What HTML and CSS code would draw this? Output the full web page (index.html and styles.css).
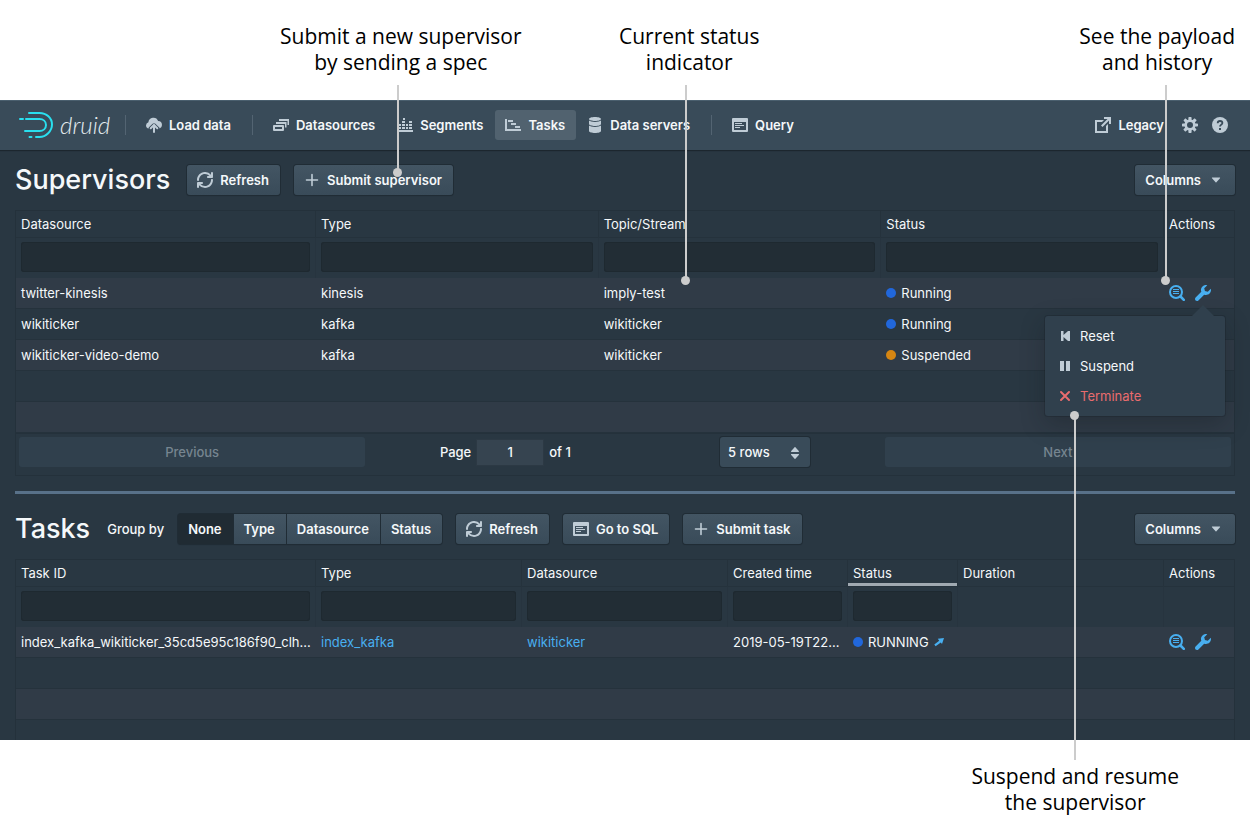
FILE: index.html
```html
<!DOCTYPE html>
<html lang="en">
<head>
<meta charset="utf-8">
<meta name="viewport" content="width=device-width, initial-scale=1">
<title>Druid console: Tasks</title>
<link rel="stylesheet" href="styles.css">
</head>
<body>
<svg class="sprite" aria-hidden="true">
  <symbol id="i-upload" viewBox="0 0 16 16">
    <path d="M12.1 4.1A5 5 0 0 0 2.4 5.3 3.6 3.6 0 0 0 0 8.6c0 1.5 1 2.600 2.300 3.050.1-.5.3-.95.7-1.350l3.600-3.600c.75-.75 2.050-.75 2.800 0l3.600 3.600c.35.35.6.8.7 1.250A4 4 0 0 0 16 8a4 4 0 0 0-3.900-3.900z"/>
    <path d="M8 15V8.500M4.700 11.300L8 8l3.300 3.300" fill="none" stroke="currentColor" stroke-width="2" stroke-linecap="round"/>
  </symbol>
  <symbol id="i-multi" viewBox="0 0 16 16">
    <path fill-rule="evenodd" d="M1 8h9a1 1 0 0 1 1 1v4a1 1 0 0 1-1 1H1a1 1 0 0 1-1-1V9a1 1 0 0 1 1-1zm1 2v2h7v-2z"/>
    <path d="M3 5h10.500v5.500H12V7H3zM6 2h10v6h-1.500V4H6z"/>
  </symbol>
  <symbol id="i-chart" viewBox="0 0 16 16">
    <path d="M0 13h16v2H0zM1 10h3v2H1zM1 7h3v2H1zM5 10h3v2H5zM5 7h3v2H5zM5 4h3v2H5zM6 1h2v2H6zM9 10h2v2H9zM9 7h2v2H9zM12 10h3v2h-3zM12 7h3v2h-3zM12 4h3v2h-3z"/>
  </symbol>
  <symbol id="i-gantt" viewBox="0 0 16 16">
    <path d="M0 2h2v10h14v2H0zM3 3h5v2H3zM6 6h5v2H6zM10 9h5v2h-5z"/>
  </symbol>
  <symbol id="i-database" viewBox="0 0 16 16">
    <path d="M8 0c3.300 0 6 .9 6 2s-2.700 2-6 2-6-.9-6-2 2.700-2 6-2zM2 3.600C3 4.500 5.300 5 8 5s5-.5 6-1.400V7c0 1.100-2.700 2-6 2s-6-.9-6-2zM2 8.600C3 9.500 5.300 10 8 10s5-.5 6-1.400V14c0 1.100-2.700 2-6 2s-6-.9-6-2z"/>
  </symbol>
  <symbol id="i-app" viewBox="0 0 16 16">
    <path fill-rule="evenodd" d="M1 1h14a1 1 0 0 1 1 1v12a1 1 0 0 1-1 1H1a1 1 0 0 1-1-1V2a1 1 0 0 1 1-1zm1 4v8h12V5z"/>
    <path d="M3 6h7v1H3zM3 8h9v1H3zM3 10h5v1H3z"/>
  </symbol>
  <symbol id="i-share" viewBox="0 0 16 16">
    <path d="M9 3H0v13h13V7l-2 2v5H2V5h5z"/>
    <path d="M9 0h7v7h-2V3.500L7.500 10 6 8.500 12.500 2H9z"/>
  </symbol>
  <symbol id="i-cog" viewBox="0 0 16 16">
    <path d="M15.190 6.390h-1.850c-.11-.37-.27-.71-.45-1.040l1.360-1.360c.31-.31.31-.82 0-1.130l-1.130-1.130c-.31-.31-.82-.31-1.130 0l-1.360 1.360c-.33-.17-.67-.33-1.040-.44V.79c0-.44-.36-.8-.8-.8h-1.600c-.44 0-.8.36-.8.8v1.860c-.39.12-.75.28-1.100.47l-1.300-1.300c-.3-.3-.79-.3-1.090 0L1.820 2.910c-.3.3-.3.79 0 1.090l1.300 1.300c-.2.34-.36.7-.48 1.090H.79c-.44 0-.8.36-.8.8v1.600c0 .44.36.8.8.8h1.850c.11.37.27.71.45 1.040l-1.360 1.360c-.31.31-.31.82 0 1.130l1.130 1.130c.31.31.82.31 1.130 0l1.360-1.360c.33.18.67.33 1.040.44v1.860c0 .44.36.8.8.8h1.600c.44 0 .8-.36.8-.8v-1.860c.39-.12.75-.28 1.100-.47l1.300 1.300c.3.3.79.3 1.090 0l1.090-1.090c.3-.3.3-.79 0-1.090l-1.300-1.300c.19-.35.36-.71.48-1.100h1.850c.44 0 .8-.36.8-.8v-1.600a.816.816 0 0 0-.81-.79zM8 11a3 3 0 1 1 0-6 3 3 0 0 1 0 6z"/>
  </symbol>
  <symbol id="i-help" viewBox="0 0 16 16">
    <circle cx="8" cy="8" r="8"/>
    <path d="M5.700 6.200C5.700 4.700 6.600 4 8 4s2.400.8 2.400 2c0 1.700-2.400 1.600-2.400 3.600" fill="none" stroke="#394b59" stroke-width="1.800"/>
    <path d="M7 11h2v2H7z" fill="#394b59"/>
  </symbol>
  <symbol id="i-refresh" viewBox="0 0 16 16">
    <path d="M14.990 6.990c-.55 0-1 .45-1 1 0 3.310-2.690 6-6 6-1.770 0-3.360-.78-4.460-2h1.460c.55 0 1-.45 1-1s-.45-1-1-1h-4c-.55 0-1 .45-1 1v4c0 .55.45 1 1 1s1-.45 1-1v-1.740a7.950 7.950 0 0 0 6 2.740c4.420 0 8-3.580 8-8 0-.55-.45-1-1-1zm0-7c-.55 0-1 .45-1 1v1.740a7.950 7.950 0 0 0-6-2.740c-4.420 0-8 3.580-8 8 0 .55.45 1 1 1s1-.45 1-1c0-3.310 2.690-6 6-6 1.770 0 3.360.78 4.460 2h-1.460c-.55 0-1 .45-1 1s.45 1 1 1h4c.55 0 1-.45 1-1v-4c0-.55-.45-1-1-1z"/>
  </symbol>
  <symbol id="i-plus" viewBox="0 0 16 16">
    <path d="M8 2.500v11M2.500 8h11" fill="none" stroke="currentColor" stroke-width="1.600" stroke-linecap="round"/>
  </symbol>
  <symbol id="i-caret" viewBox="0 0 16 16">
    <path d="M4.300 5.500h7.400c.4 0 .6.4.3.7L8.400 10.300a.5.5 0 0 1-.8 0L4 6.200c-.3-.3-.1-.7.300-.7z"/>
  </symbol>
  <symbol id="i-updown" viewBox="0 0 16 16">
    <path d="M8.400 2.300l3.400 3.800c.4.4.2.9-.3.9h-7c-.5 0-.7-.5-.3-.9l3.400-3.800c.2-.3.600-.3.800 0zM8.400 13.700l3.400-3.800c.4-.4.2-.9-.3-.9h-7c-.5 0-.7.5-.3.900l3.400 3.800c.2.300.600.300.800 0z"/>
  </symbol>
  <symbol id="i-detail" viewBox="0 0 16 16">
    <circle cx="7" cy="7" r="6" fill="none" stroke="currentColor" stroke-width="2"/>
    <path d="M11.500 11.500l3.300 3.300" stroke="currentColor" stroke-width="2.600" stroke-linecap="round"/>
    <path d="M4 4h6v1H4zM4 6h6v1H4zM4 8h6v1H4z"/>
  </symbol>
  <symbol id="i-wrench" viewBox="0 0 16 16">
    <path d="M15.830 3.700l-3.060 3.050-2.840-.7-.7-2.830L12.290.17a5.004 5.004 0 0 0-4.830 1.290 4.967 4.967 0 0 0-1.120 5.360L.58 12.580c-.36.36-.58.86-.58 1.410 0 1.100.9 2 2 2 .55 0 1.050-.22 1.410-.59l5.770-5.770c1.790.69 3.910.35 5.350-1.120 1.320-1.300 1.740-3.150 1.300-4.810z"/>
  </symbol>
  <symbol id="i-reset" viewBox="0 0 16 16"><path d="M4 3h2.500v4L11 3h2v10h-2L6.500 9v4H4z"/></symbol>
  <symbol id="i-pause" viewBox="0 0 16 16"><path d="M3 3h4v10H3zM9 3h4v10H9z"/></symbol>
  <symbol id="i-cross" viewBox="0 0 16 16"><path d="M4 4l8 8M12 4l-8 8" stroke="currentColor" stroke-width="2" stroke-linecap="round"/></symbol>
  <symbol id="i-arrow" viewBox="0 0 10 10"><path d="M3.800 1.800L10 1 8 7 6.800 5.600 1.600 9.200.3 7.600 5.200 3.700z"/></symbol>
</svg>

<div class="page">
  <main class="app">
    <nav class="navbar" aria-label="Main">
      <a class="logo" href="#">
        <svg class="logo-mark" viewBox="0 0 36 28" aria-hidden="true">
          <path d="M11 2h10.500c7 0 12.500 5 12.500 11.500S28 26 21.500 26H18M13.500 26H11.500M2 8h3M8 8h13.500c3.700 0 6.500 2.500 6.500 6s-2.800 6-6.500 6H7" fill="none" stroke="#29dfee" stroke-width="2" stroke-linecap="round"/>
        </svg>
        <span>druid</span>
      </a>
      <span class="divider"></span>
      <a class="nav-item" href="#"><svg class="icon"><use href="#i-upload"/></svg>Load data</a>
      <span class="divider"></span>
      <a class="nav-item" href="#"><svg class="icon"><use href="#i-multi"/></svg>Datasources</a>
      <a class="nav-item" href="#"><svg class="icon"><use href="#i-chart"/></svg>Segments</a>
      <a class="nav-item active" href="#" aria-current="page"><svg class="icon"><use href="#i-gantt"/></svg>Tasks</a>
      <a class="nav-item" href="#"><svg class="icon"><use href="#i-database"/></svg>Data servers</a>
      <span class="divider"></span>
      <a class="nav-item" href="#"><svg class="icon"><use href="#i-app"/></svg>Query</a>
      <div class="nav-end">
        <a class="nav-item" href="#"><svg class="icon"><use href="#i-share"/></svg>Legacy</a>
        <button class="nav-icon" type="button" aria-label="Settings"><svg class="icon"><use href="#i-cog"/></svg></button>
        <button class="nav-icon" type="button" aria-label="Help"><svg class="icon"><use href="#i-help"/></svg></button>
      </div>
    </nav>

    <section class="view">
      <div class="control-bar">
        <h1>Supervisors</h1>
        <div class="controls">
          <button class="btn" type="button"><svg class="icon"><use href="#i-refresh"/></svg>Refresh</button>
          <button class="btn" type="button"><svg class="icon"><use href="#i-plus"/></svg>Submit supervisor</button>
        </div>
        <button class="btn columns" type="button">Columns<svg class="icon"><use href="#i-caret"/></svg></button>
      </div>
      <div class="table-box">
        <table>
          <colgroup><col class="c-id"><col><col><col><col class="c-actions"></colgroup>
          <thead>
            <tr class="head"><th>Datasource</th><th>Type</th><th>Topic/Stream</th><th>Status</th><th>Actions</th></tr>
            <tr class="filters">
              <td><input type="text" aria-label="Filter datasource"></td>
              <td><input type="text" aria-label="Filter type"></td>
              <td><input type="text" aria-label="Filter topic or stream"></td>
              <td><input type="text" aria-label="Filter status"></td>
              <td></td>
            </tr>
          </thead>
          <tbody>
            <tr>
              <td>twitter-kinesis</td><td>kinesis</td><td>imply-test</td>
              <td><span class="status"><i class="dot"></i>Running</span></td>
              <td class="actions-cell">
                <div class="actions">
                  <button type="button" aria-label="Details"><svg class="icon"><use href="#i-detail"/></svg></button>
                  <div class="menu-anchor">
                    <button type="button" aria-label="Actions" aria-expanded="true"><svg class="icon"><use href="#i-wrench"/></svg></button>
                    <div class="popover">
                      <button type="button"><svg class="icon"><use href="#i-reset"/></svg>Reset</button>
                      <button type="button"><svg class="icon"><use href="#i-pause"/></svg>Suspend</button>
                      <button class="danger" type="button"><svg class="icon"><use href="#i-cross"/></svg>Terminate</button>
                    </div>
                  </div>
                </div>
              </td>
            </tr>
            <tr><td>wikiticker</td><td>kafka</td><td>wikiticker</td><td><span class="status"><i class="dot"></i>Running</span></td><td></td></tr>
            <tr><td>wikiticker-video-demo</td><td>kafka</td><td>wikiticker</td><td><span class="status"><i class="dot suspended"></i>Suspended</span></td><td></td></tr>
            <tr><td></td><td></td><td></td><td></td><td></td></tr>
            <tr><td></td><td></td><td></td><td></td><td></td></tr>
          </tbody>
        </table>
        <div class="pagination">
          <button class="page-btn" type="button" disabled>Previous</button>
          <div class="page-center">
            <label class="page-info">Page <input type="text" value="1"> of 1</label>
            <div class="select">
              <select aria-label="Rows per page"><option>5 rows</option></select>
              <svg class="icon"><use href="#i-updown"/></svg>
            </div>
          </div>
          <button class="page-btn" type="button" disabled>Next</button>
        </div>
      </div>

      <div class="splitter"></div>

      <div class="control-bar">
        <h1>Tasks</h1>
        <div class="controls">
          <span>Group by</span>
          <div class="group">
            <button class="btn pressed" type="button" aria-pressed="true">None</button>
            <button class="btn" type="button">Type</button>
            <button class="btn" type="button">Datasource</button>
            <button class="btn" type="button">Status</button>
          </div>
          <button class="btn" type="button"><svg class="icon"><use href="#i-refresh"/></svg>Refresh</button>
          <button class="btn" type="button"><svg class="icon"><use href="#i-app"/></svg>Go to SQL</button>
          <button class="btn" type="button"><svg class="icon"><use href="#i-plus"/></svg>Submit task</button>
        </div>
        <button class="btn columns" type="button">Columns<svg class="icon"><use href="#i-caret"/></svg></button>
      </div>
      <div class="table-box">
        <table>
          <colgroup><col class="c-id"><col><col><col class="c-time"><col class="c-status"><col><col class="c-actions"></colgroup>
          <thead>
            <tr class="head"><th>Task ID</th><th>Type</th><th>Datasource</th><th>Created time</th><th class="sorted" aria-sort="descending">Status</th><th>Duration</th><th>Actions</th></tr>
            <tr class="filters">
              <td><input type="text" aria-label="Filter task ID"></td>
              <td><input type="text" aria-label="Filter type"></td>
              <td><input type="text" aria-label="Filter datasource"></td>
              <td><input type="text" aria-label="Filter created time"></td>
              <td><input type="text" aria-label="Filter status"></td>
              <td></td><td></td>
            </tr>
          </thead>
          <tbody>
            <tr>
              <td>index_kafka_wikiticker_35cd5e95c186f90_clh...</td>
              <td><a href="#">index_kafka</a></td>
              <td><a href="#">wikiticker</a></td>
              <td>2019-05-19T22...</td>
              <td><span class="status"><i class="dot"></i>RUNNING <a href="#" aria-label="Open task location"><svg class="go"><use href="#i-arrow"/></svg></a></span></td>
              <td></td>
              <td class="actions-cell">
                <div class="actions">
                  <button type="button" aria-label="Details"><svg class="icon"><use href="#i-detail"/></svg></button>
                  <button type="button" aria-label="Actions"><svg class="icon"><use href="#i-wrench"/></svg></button>
                </div>
              </td>
            </tr>
            <tr><td></td><td></td><td></td><td></td><td></td><td></td><td></td></tr>
            <tr><td></td><td></td><td></td><td></td><td></td><td></td><td></td></tr>
            <tr><td></td><td></td><td></td><td></td><td></td><td></td><td></td></tr>
          </tbody>
        </table>
      </div>
    </section>
  </main>

  <p class="note note-submit">Submit a new supervisor<br>by sending a spec</p>
  <span class="pin pin-submit"></span>
  <p class="note note-status">Current status<br>indicator</p>
  <span class="pin pin-status"></span>
  <p class="note note-payload">See the payload<br>and history</p>
  <span class="pin pin-payload"></span>
  <p class="note note-suspend">Suspend and resume<br>the supervisor</p>
  <span class="pin pin-suspend"></span>
</div>
</body>
</html>
```

FILE: styles.css
```css
*, *::before, *::after { box-sizing: border-box; }

body {
  margin: 0;
  background: #fff;
  color: #f5f8fa;
  font: 400 13px/18px Inter, "Liberation Sans", sans-serif;
}

button, input, select { font: inherit; color: inherit; margin: 0; border: 0; }
button { cursor: pointer; background: none; padding: 0; }
a { color: #48aff0; text-decoration: none; }
.sprite { display: none; }
.icon { width: 16px; height: 16px; flex: none; fill: currentColor; display: block; }

.page {
  position: relative;
  height: 100vh;
  padding: 100px 0;
}

.app {
  height: 100%;
  overflow: hidden;
  background: #293742;
}

/* Navigation */
.navbar {
  display: flex;
  align-items: center;
  height: 50px;
  padding: 0 15px 0 18px;
  background: #394b59;
  box-shadow: inset 0 1px 0 #4a5f6e, 0 1px 1px rgba(16, 22, 26, .5);
}
.logo {
  display: flex;
  align-items: center;
  gap: 6px;
  width: 97px;
  color: #e4ebf0;
  font: italic 300 24px/28px Lato, sans-serif;
}
.logo-mark { width: 36px; height: 28px; flex: none; }
.divider { width: 1px; height: 20px; margin: 0 10px; background: #536472; }
.nav-item {
  display: flex;
  align-items: center;
  gap: 7px;
  height: 30px;
  padding: 0 11px 0 10px;
  border-radius: 3px;
  color: #f5f8fa;
  font-weight: 600;
}
.nav-item + .nav-item { margin-left: 1px; }
.nav-item .icon, .nav-icon, .btn .icon { color: #bfccd6; }
.nav-item.active { background: #51626f; }
.nav-end { display: flex; margin-left: auto; }
.nav-icon { width: 30px; height: 30px; display: grid; place-items: center; }

/* View */
.view { padding: 15px 15px 0; }
.control-bar {
  display: flex;
  align-items: center;
  gap: 17px;
  height: 30px;
  margin-bottom: 15px;
}
.control-bar h1 { margin: 0; font-size: 27px; line-height: 32px; font-weight: 500; }
.controls { display: flex; align-items: center; gap: 14px; font-weight: 500; }
.btn {
  display: flex;
  align-items: center;
  gap: 7px;
  height: 30px;
  padding: 0 11px 0 10px;
  border-radius: 3px;
  background: linear-gradient(#435563, #394b59);
  box-shadow: 0 0 0 1px #202c35, 0 1px 1px #202c35;
  font-weight: 600;
}
.columns { margin-left: auto; }
.group { display: flex; gap: 1px; }
.group .btn { border-radius: 0; }
.group .btn:first-child { border-radius: 3px 0 0 3px; }
.group .btn:last-child { border-radius: 0 3px 3px 0; }
.btn.pressed { background: #202b33; }
.splitter { height: 3px; margin: 15px 0 20px; background: #587189; }

/* Tables */
.table-box { border: 1px solid #24313b; }
table { width: 100%; table-layout: fixed; border-collapse: separate; border-spacing: 0; }
.c-id { width: 300px; }
.c-time { width: 120px; }
.c-status { width: 110px; }
.c-actions { width: 70px; }
th, td {
  padding: 0 5px;
  text-align: left;
  font-weight: inherit;
  white-space: nowrap;
  overflow: hidden;
  text-overflow: ellipsis;
}
.head th { height: 26px; border-right: 1px solid #25323c; }
.head th:last-child { border-right: 0; }
.head .sorted { box-shadow: inset 0 -3px 0 #a0a9b1; }
.filters td {
  height: 41px;
  padding-top: 4px;
  border-top: 1px solid #25323c;
  border-right: 1px solid #27343f;
  vertical-align: top;
}
.filters td:last-child { border-right: 0; }
.filters input {
  display: block;
  width: 100%;
  height: 30px;
  padding: 0 10px;
  border-radius: 3px;
  background: #222d35;
  box-shadow: inset 0 0 0 1px #1e2930;
}
tbody td { height: 31px; border-bottom: 1px solid #25323c; }
tbody tr:nth-child(odd) td { background: #303b47; }
.status { display: flex; align-items: center; gap: 5px; }
.dot { width: 10px; height: 10px; border-radius: 50%; background: #2167db; }
.dot.suspended { background: #d58512; }
.go { display: block; width: 10px; height: 10px; fill: currentColor; }
.actions-cell { overflow: visible; }
.actions { display: flex; gap: 10px; color: #48aff0; }
.actions button { display: block; }
.menu-anchor { position: relative; }

.popover {
  position: absolute;
  z-index: 2;
  top: 31px;
  right: -14px;
  width: 180px;
  padding: 5px;
  border-radius: 3px;
  background: #30404d;
  color: #f5f8fa;
  box-shadow: 0 0 0 1px rgba(16, 22, 26, .2), 0 8px 24px rgba(16, 22, 26, .3);
}
.popover::before {
  content: "";
  position: absolute;
  top: -11px;
  right: 11px;
  border: 11px solid transparent;
  border-top: 0;
  border-bottom-color: #30404d;
}
.popover button {
  display: flex;
  align-items: center;
  gap: 7px;
  width: 100%;
  height: 30px;
  padding: 0 7px;
}
.popover .icon { color: #bfccd6; }
.popover .danger, .popover .danger .icon { color: #e96c6e; }

/* Pagination */
.pagination { display: flex; padding: 3px 3px 8px; border-top: 1px solid #24313b; font-weight: 500; }
.page-btn { flex: 1; height: 30px; border-radius: 3px; background: #30404d; color: #768590; }
.page-center { flex: 1.5; display: flex; align-items: center; justify-content: space-around; }
.page-info { display: flex; align-items: center; gap: 5px; }
.page-info input {
  width: 68px;
  height: 27px;
  padding: 0;
  text-align: center;
  background: #364450;
  box-shadow: inset 0 0 0 1px #2c3944;
}
.select { position: relative; width: 90px; }
.select select {
  appearance: none;
  display: block;
  width: 100%;
  height: 30px;
  padding: 0 25px 0 8px;
  border-radius: 3px;
  background: #394b59;
  box-shadow: 0 0 0 1px #202c35;
}
.select .icon { position: absolute; right: 7px; top: 8px; color: #bfccd6; pointer-events: none; }

/* Callouts lying over the console */
.note {
  position: absolute;
  margin: 0;
  color: #000;
  text-align: center;
  white-space: nowrap;
  font: 400 21px/26px "Open Sans", "Noto Sans", sans-serif;
}
.note-submit { left: 280px; top: 23px; }
.note-status { left: 619px; top: 23px; }
.note-payload { right: 15px; top: 23px; }
.note-suspend { right: 71px; bottom: 25px; }
.pin { position: absolute; z-index: 3; width: 2px; background: #ccc; }
.pin::after {
  content: "";
  position: absolute;
  left: -4px;
  bottom: -4px;
  width: 9px;
  height: 9px;
  border-radius: 50%;
  background: #ccc;
}
.pin-submit { left: 397px; top: 85px; height: 88px; }
.pin-status { left: 685px; top: 85px; height: 196px; }
.pin-payload { right: 83px; top: 85px; height: 196px; }
.pin-suspend { right: 174px; top: 415px; bottom: 80px; }
.pin-suspend::after { bottom: auto; top: -4px; }
```
